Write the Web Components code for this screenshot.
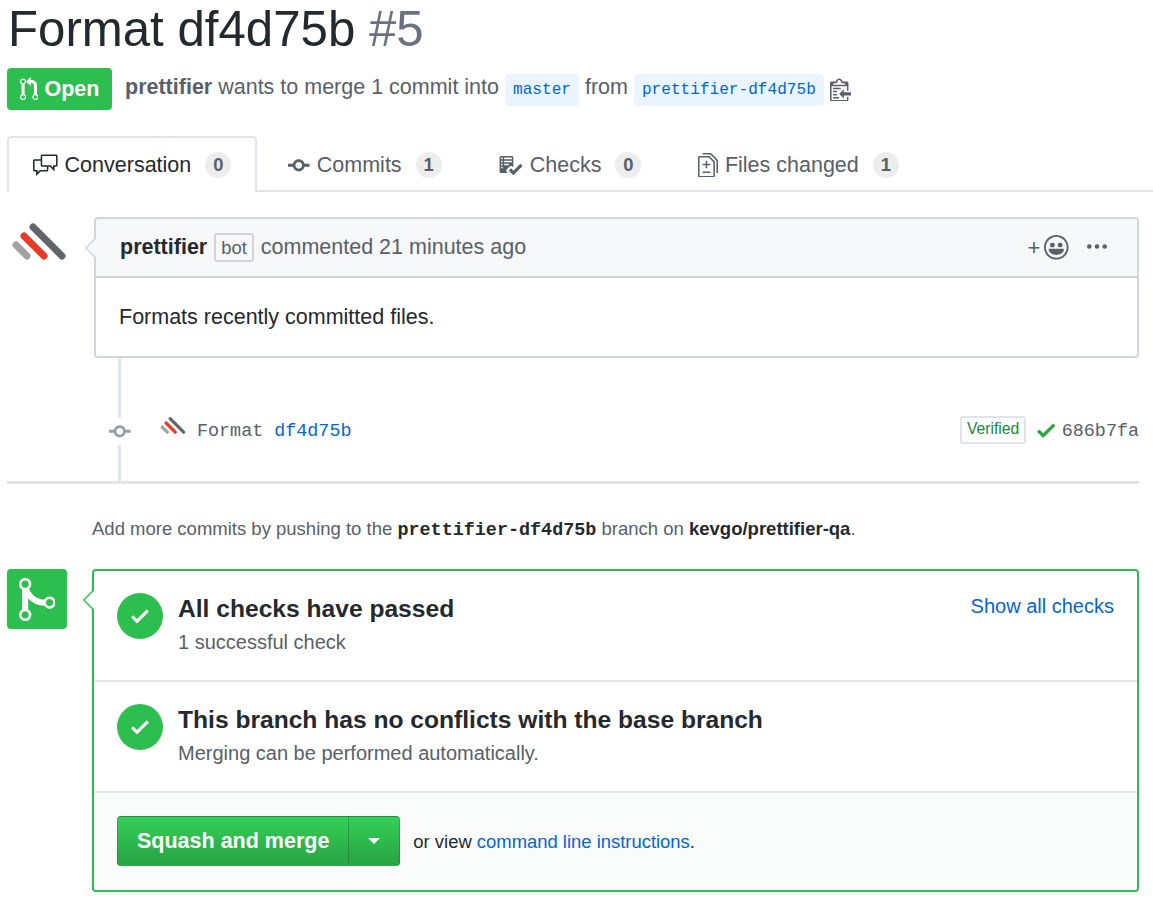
<!DOCTYPE html>
<html>
<head>
<meta charset="utf-8">
<title>Format df4d75b #5</title>
<style>
  html, body { margin: 0; background: #fff; }
  body { font-family: "Liberation Sans", Arial, sans-serif; font-size: 21.5px; color: #24292e; }
</style>
</head>
<body>
<pr-page>
  <pr-header></pr-header>
  <pr-tabs>
    <pr-tab icon="comment" count="0" selected>Conversation</pr-tab>
    <pr-tab icon="commit" count="1">Commits</pr-tab>
    <pr-tab icon="checklist" count="0">Checks</pr-tab>
    <pr-tab icon="diff" count="1">Files changed</pr-tab>
  </pr-tabs>
  <pr-comment></pr-comment>
  <pr-commit></pr-commit>
  <pr-hint></pr-hint>
  <pr-merge>
    <merge-section title="All checks have passed" note="1 successful check" link="Show all checks"></merge-section>
    <merge-section title="This branch has no conflicts with the base branch" note="Merging can be performed automatically."></merge-section>
    <merge-footer></merge-footer>
  </pr-merge>
</pr-page>

<script>
// octicons, viewBox width + path
const ICONS = {
  pr: [12, 'M11 11.28V5c-.03-.78-.34-1.47-.94-2.06C9.46 2.35 8.78 2.03 8 2H7V0L4 3l3 3V4h1c.27.02.48.11.69.31.21.2.3.42.31.69v6.28A1.993 1.993 0 0 0 10 15a1.993 1.993 0 0 0 1-3.72zm-1 2.92c-.66 0-1.2-.55-1.2-1.2 0-.65.55-1.2 1.2-1.2.65 0 1.2.55 1.2 1.2 0 .65-.55 1.2-1.2 1.2zM4 3c0-1.11-.89-2-2-2a1.993 1.993 0 0 0-1 3.72v6.56A1.993 1.993 0 0 0 2 15a1.993 1.993 0 0 0 1-3.72V4.72c.59-.34 1-.98 1-1.72zm-.8 10c0 .66-.55 1.2-1.2 1.2-.65 0-1.2-.55-1.2-1.2 0-.65.55-1.2 1.2-1.2.65 0 1.2.55 1.2 1.2zM2 4.2C1.34 4.2.8 3.65.8 3c0-.65.55-1.2 1.2-1.2.65 0 1.2.55 1.2 1.2 0 .65-.55 1.2-1.2 1.2z'],
  comment: [16, 'M15 1H6c-.55 0-1 .45-1 1v2H1c-.55 0-1 .45-1 1v6c0 .55.45 1 1 1h1v3l3-3h4c.55 0 1-.45 1-1V9h1l3 3V9h1c.55 0 1-.45 1-1V2c0-.55-.45-1-1-1zM9 11H4.5L3 12.5V11H1V5h4v3c0 .55.45 1 1 1h3v2zm6-3h-2v1.5L11.5 8H6V2h9v6z'],
  commit: [14, 'M10.86 7c-.45-1.72-2-3-3.86-3-1.86 0-3.41 1.28-3.86 3H0v2h3.14c.45 1.72 2 3 3.86 3 1.86 0 3.41-1.28 3.86-3H14V7h-3.14zM7 10.2c-1.22 0-2.2-.98-2.2-2.2 0-1.22.98-2.2 2.2-2.2 1.22 0 2.2.98 2.2 2.2 0 1.22-.98 2.2-2.2 2.2z'],
  checklist: [16, 'M16 8.5l-6 6-3-3L8.5 10l1.5 1.5L14.5 7 16 8.5zM5.7 12.2l.8.8H2c-.55 0-1-.45-1-1V3c0-.55.45-1 1-1h7c.55 0 1 .45 1 1v6.5l-.8-.8c-.39-.39-1.03-.39-1.42 0L5.7 10.8a.996.996 0 0 0 0 1.41v-.01zM4 4h5V3H4v1zm0 2h5V5H4v1zm0 2h3V7H4v1zM3 9H2v1h1V9zm0-2H2v1h1V7zm0-2H2v1h1V5zm0-2H2v1h1V3z'],
  diff: [13, 'M6 7h2v1H6v2H5V8H3V7h2V5h1v2zm-3 6h5v-1H3v1zM7.5 2L11 5.5V15c0 .55-.45 1-1 1H1c-.55 0-1-.45-1-1V3c0-.55.45-1 1-1h6.5zM10 6L7 3H1v12h9V6zM8.5 0H3v1h5l4 4v8h1V4.5L8.5 0z'],
  clippy: [14, 'M2 13h4v1H2v-1zm5-6H2v1h5V7zm2 3V8l-3 3 3 3v-2h5v-2H9zM4.5 9H2v1h2.5V9zM2 12h2.5v-1H2v1zm9 1h1v2c-.02.28-.11.52-.3.7-.19.18-.42.28-.7.3H1c-.55 0-1-.45-1-1V4c0-.55.45-1 1-1h3c0-1.11.89-2 2-2 1.11 0 2 .89 2 2h3c.55 0 1 .45 1 1v5h-1V6H1v9h10v-2zM2 5h8c0-.55-.45-1-1-1H8c-.55 0-1-.45-1-1s-.45-1-1-1-1 .45-1 1-.45 1-1 1H3c-.55 0-1 .45-1 1z'],
  check: [12, 'M12 5l-8 8-4-4 1.5-1.5L4 10l6.5-6.5L12 5z'],
  merge: [12, 'M10 7c-.73 0-1.38.41-1.73 1.02V8C7.22 7.98 6 7.64 5.14 6.98c-.75-.58-1.5-1.61-1.89-2.44A1.993 1.993 0 0 0 2 .99C.89.99 0 1.89 0 3a2 2 0 0 0 1 1.72v6.56c-.59.35-1 .99-1 1.72 0 1.11.89 2 2 2a1.993 1.993 0 0 0 1-3.72V7.67c.67.7 1.44 1.27 2.3 1.69.86.42 2.03.63 2.97.64v-.02c.36.61 1 1.02 1.73 1.02 1.11 0 2-.89 2-2 0-1.11-.89-2-2-2zm-6.8 6c0 .66-.55 1.2-1.2 1.2-.65 0-1.2-.55-1.2-1.2 0-.65.55-1.2 1.2-1.2.65 0 1.2.55 1.2 1.2zM2 4.2C1.34 4.2.8 3.65.8 3c0-.65.55-1.2 1.2-1.2.65 0 1.2.55 1.2 1.2 0 .65-.55 1.2-1.2 1.2zm8 6c-.66 0-1.2-.55-1.2-1.2 0-.65.55-1.2 1.2-1.2.65 0 1.2.55 1.2 1.2 0 .65-.55 1.2-1.2 1.2z'],
  kebab: [13, 'M1.5 9a1.5 1.5 0 1 0 0-3 1.5 1.5 0 0 0 0 3zm5 0a1.5 1.5 0 1 0 0-3 1.5 1.5 0 0 0 0 3zM13 7.5a1.5 1.5 0 1 1-3 0 1.5 1.5 0 0 1 3 0z'],
  smiley: [16, 'M8 0C3.58 0 0 3.58 0 8s3.58 8 8 8 8-3.58 8-8-3.58-8-8-8zm4.81 12.81a6.72 6.72 0 0 1-2.17 1.45c-.83.36-1.72.53-2.64.53-.92 0-1.81-.17-2.64-.53-.81-.34-1.55-.83-2.17-1.45a6.773 6.773 0 0 1-1.45-2.17A6.59 6.59 0 0 1 1.21 8c0-.92.17-1.81.53-2.64.34-.81.83-1.55 1.45-2.17.62-.62 1.36-1.11 2.17-1.45A6.59 6.59 0 0 1 8 1.21c.92 0 1.81.17 2.64.53.81.34 1.55.83 2.17 1.45.62.62 1.11 1.36 1.45 2.17.36.83.53 1.72.53 2.64 0 .92-.17 1.81-.53 2.64-.34.81-.83 1.55-1.45 2.17zM4 6.8v-.59c0-.66.53-1.19 1.2-1.19h.59c.66 0 1.19.53 1.19 1.19v.59c0 .67-.53 1.2-1.19 1.2H5.2C4.53 8 4 7.47 4 6.8zm5 0v-.59c0-.66.53-1.19 1.2-1.19h.59c.66 0 1.19.53 1.19 1.19v.59c0 .67-.53 1.2-1.19 1.2h-.59C9.53 8 9 7.47 9 6.8zm4 3.2c-.72 1.88-2.91 3-5 3s-4.28-1.13-5-3c-.14-.39.23-1 .66-1h8.59c.41 0 .89.61.75 1z']
};

// small helper, each element is just a template string in its shadow root
function shadow(el, html) {
  el.attachShadow({ mode: 'open' });
  el.shadowRoot.innerHTML = html;
}

class OctIcon extends HTMLElement {
  connectedCallback() {
    const [w, d] = ICONS[this.getAttribute('name')];
    const h = Number(this.getAttribute('size') || 24.6);
    shadow(this, `
      <style>
        :host { display: inline-flex; color: inherit; flex: none; }
        svg { display: block; fill: currentColor; }
      </style>
      <svg width="${(w * h / 16).toFixed(2)}" height="${h}" viewBox="0 0 ${w} 16"><path fill-rule="evenodd" d="${d}"/></svg>`);
  }
}
customElements.define('oct-icon', OctIcon);

class PrettierLogo extends HTMLElement {
  connectedCallback() {
    const s = this.getAttribute('size') || 60;
    shadow(this, `
      <style>
        :host { display: block; flex: none; width: ${s}px; height: ${s}px; }
        svg { display: block; }
      </style>
      <svg width="${s}" height="${s}" viewBox="0 0 60 60" fill="none" stroke-width="7" stroke-linecap="round">
        <line x1="26" y1="10" x2="55" y2="39" stroke="#646568"/>
        <line x1="17" y1="19" x2="37" y2="39" stroke="#ea3a26"/>
        <line x1="9" y1="28" x2="20" y2="39" stroke="#a2a2a2"/>
      </svg>`);
  }
}
customElements.define('prettier-logo', PrettierLogo);

class PrPage extends HTMLElement {
  constructor() {
    super();
    shadow(this, `
      <style>
        :host { display: block; padding: 0 14px 0 7px; height: 910px; box-sizing: border-box; overflow: hidden; }
      </style>
      <slot></slot>`);
  }
}
customElements.define('pr-page', PrPage);

class BranchRef extends HTMLElement {
  constructor() {
    super();
    shadow(this, `
      <style>
        :host {
          display: inline-block; height: 32px; line-height: 32px; padding: 0 8px; margin-top: 2px;
          background: #eaf5ff; border-radius: 4px; color: #0366d6;
          font-family: "Liberation Mono", monospace; font-size: 16.1px;
        }
      </style>
      <slot></slot>`);
  }
}
customElements.define('branch-ref', BranchRef);

class PrHeader extends HTMLElement {
  constructor() {
    super();
    shadow(this, `
      <style>
        :host { display: block; }
        h1 { margin: 0; font-size: 49.2px; font-weight: 400; line-height: 57px; color: #24292e; padding-left: 1px; }
        h1 span { color: #6a737d; }
        .meta { display: flex; align-items: center; margin-top: 11px; height: 42px; color: #586069; font-size: 21.5px; }
        .state {
          display: flex; align-items: center; gap: 6px; box-sizing: border-box;
          width: 105px; height: 42px; padding-left: 13px; border-radius: 4px;
          background: #2cbe4e; color: #fff; font-weight: 700; margin-right: 13px;
        }
        .text { position: relative; top: -2px; white-space: pre; }
        branch-ref { margin-left: 6px; margin-right: 6px; }
        .clip { color: #586069; }
      </style>
      <h1>Format df4d75b <span>#5</span></h1>
      <div class="meta">
        <div class="state"><oct-icon name="pr" size="24.6"></oct-icon>Open</div>
        <span class="text"><b>prettifier</b> wants to merge 1 commit into</span>
        <branch-ref>master</branch-ref>
        <span class="text">from</span>
        <branch-ref>prettifier-df4d75b</branch-ref>
        <oct-icon class="clip" name="clippy" size="24.6"></oct-icon>
      </div>`);
  }
}
customElements.define('pr-header', PrHeader);

class PrTabs extends HTMLElement {
  constructor() {
    super();
    shadow(this, `
      <style>
        :host {
          display: flex; margin: 26px -14px 0 0; height: 56px; box-sizing: border-box;
          border-bottom: 2px solid #e1e4e8;
        }
      </style>
      <slot></slot>`);
  }
}
customElements.define('pr-tabs', PrTabs);

class PrTab extends HTMLElement {
  connectedCallback() {
    shadow(this, `
      <style>
        :host {
          display: flex; align-items: center; box-sizing: border-box; height: 56px;
          padding: 0 24.5px 0 28px; border: 2px solid transparent; border-bottom: 0;
          color: #586069; font-size: 21.5px; white-space: nowrap;
        }
        :host([selected]) {
          background: #fff; color: #24292e; border-color: #e1e4e8; margin-right: 1px;
          border-radius: 4px 4px 0 0; padding-left: 24px; padding-right: 24px;
        }
        oct-icon { margin-right: 7px; }
        .count {
          margin-left: 14px; min-width: 26px; height: 26px; line-height: 26px; text-align: center;
          border-radius: 13px; background: rgba(27,31,35,.08);
          color: #586069; font-size: 18.4px; font-weight: 700;
        }
      </style>
      <oct-icon name="${this.getAttribute('icon')}" size="24.6"></oct-icon>
      <slot></slot>
      <span class="count">${this.getAttribute('count')}</span>`);
  }
}
customElements.define('pr-tab', PrTab);

class PrComment extends HTMLElement {
  constructor() {
    super();
    shadow(this, `
      <style>
        :host { display: flex; margin-top: 25px; }
        .box {
          position: relative; flex: 1; margin-left: 27px; box-sizing: border-box; height: 141px;
          border: 2px solid #d1d5da; border-radius: 4px;
        }
        .box::before, .box::after {
          content: ""; position: absolute; left: -11px; top: 19px; width: 20px; height: 20px;
          transform: rotate(45deg) scale(.72, .72); background: #d1d5da;
        }
        .box::after { left: -9px; background: #f6f8fa; }
        header {
          position: relative; z-index: 1; display: flex; align-items: center; height: 59px;
          padding: 0 30px 0 24px; box-sizing: border-box;
          background: #f6f8fa; border-bottom: 2px solid #d1d5da; border-radius: 2px 2px 0 0; color: #586069;
          font-size: 21.5px; white-space: nowrap;
        }
        b { color: #24292e; margin-right: 7px; }
        .bot {
          display: inline-block; border: 2px solid #d1d5da; border-radius: 3px; height: 25px; line-height: 25px;
          padding: 0 5px; font-size: 18.4px; margin-right: 7px;
        }
        .acts { margin-left: auto; display: flex; align-items: center; color: #586069; }
        .plus { font-size: 22px; line-height: 23px; margin-right: 4px; }
        .kebab { margin-left: 18px; display: flex; }
        .body { padding: 0 23px; line-height: 78px; font-size: 21.5px; color: #24292e; position: relative; z-index: 1; }
      </style>
      <prettier-logo size="60"></prettier-logo>
      <div class="box">
        <header>
          <b>prettifier</b><span class="bot">bot</span><span>commented 21 minutes ago</span>
          <span class="acts">
            <span class="plus">+</span><oct-icon name="smiley" size="24.6"></oct-icon>
            <span class="kebab"><oct-icon name="kebab" size="24.6"></oct-icon></span>
          </span>
        </header>
        <div class="body">Formats recently committed files.</div>
      </div>`);
  }
}
customElements.define('pr-comment', PrComment);

class PrCommit extends HTMLElement {
  constructor() {
    super();
    shadow(this, `
      <style>
        :host {
          display: block; position: relative; height: 126px; box-sizing: border-box;
          padding-top: 54px; border-bottom: 3px solid #e1e4e8;
        }
        .line { position: absolute; left: 111px; top: 0; bottom: 0; width: 3px; background: #e1e4e8; }
        .node {
          position: absolute; left: 102px; top: 60px; padding: 1px 0; background: #fff;
          display: flex; color: #959da5;
        }
        .row {
          display: flex; align-items: center; height: 36px; padding-left: 151px;
          font-family: "Liberation Mono", monospace; font-size: 18.4px; color: #586069;
        }
        .row > span, .row > a, .right > span:last-child { position: relative; top: 1px; }
        prettier-logo { margin: -4px 11px 0 0; }
        a { color: #0366d6; margin-left: 11px; }
        .right { margin-left: auto; display: flex; align-items: center; }
        .ver {
          box-sizing: border-box; height: 28px; line-height: 22px; padding: 0 5px;
          border: 2px solid #e1e4e8; border-radius: 3px;
          font-family: "Liberation Sans", sans-serif; font-size: 15.7px; color: #22863a; margin-right: 11px;
        }
        .ok { color: #28a745; margin-right: 6px; }
      </style>
      <div class="line"></div>
      <div class="node"><oct-icon name="commit" size="24.6"></oct-icon></div>
      <div class="row">
        <prettier-logo size="28"></prettier-logo>
        <span>Format</span><a>df4d75b</a>
        <div class="right">
          <span class="ver">Verified</span>
          <oct-icon class="ok" name="check" size="24.6"></oct-icon>
          <span>686b7fa</span>
        </div>
      </div>`);
  }
}
customElements.define('pr-commit', PrCommit);

class PrHint extends HTMLElement {
  constructor() {
    super();
    shadow(this, `
      <style>
        :host { display: block; margin-top: 33px; padding-left: 85px; font-size: 18.5px; line-height: 24px; color: #586069; white-space: nowrap; }
        code { font-family: "Liberation Mono", monospace; font-weight: 700; color: #24292e; font-size: 18.43px; }
        b { color: #24292e; }
      </style>
      Add more commits by pushing to the <code>prettifier-df4d75b</code> branch on <b>kevgo/prettifier-qa</b>.`);
  }
}
customElements.define('pr-hint', PrHint);

class PrMerge extends HTMLElement {
  constructor() {
    super();
    shadow(this, `
      <style>
        :host { display: flex; margin-top: 26px; align-items: flex-start; }
        .badge {
          width: 60px; height: 60px; flex: none; border-radius: 4px; background: #2cbe4e;
          display: flex; align-items: center; justify-content: center; color: #fff;
        }
        .box {
          position: relative; flex: 1; margin-left: 25px; height: 323px; box-sizing: border-box;
          border: 2px solid #2cbe4e; border-radius: 4px;
        }
        .box::before, .box::after {
          content: ""; position: absolute; left: -11px; top: 19px; width: 20px; height: 20px;
          transform: rotate(45deg) scale(.72, .72); background: #2cbe4e;
        }
        .box::after { left: -9px; background: #fff; }
        .inner { position: relative; z-index: 1; }
      </style>
      <div class="badge"><oct-icon name="merge" size="49"></oct-icon></div>
      <div class="box"><div class="inner"><slot></slot></div></div>`);
  }
}
customElements.define('pr-merge', PrMerge);

class MergeSection extends HTMLElement {
  connectedCallback() {
    const link = this.getAttribute('link');
    shadow(this, `
      <style>
        :host {
          display: flex; height: 111px; box-sizing: border-box; padding: 22px 23px 0 23px;
          border-bottom: 2px solid #e1e4e8;
        }
        .dot {
          width: 46px; height: 46px; border-radius: 50%; background: #2cbe4e; color: #fff; flex: none;
          display: flex; align-items: center; justify-content: center; margin-right: 15px;
        }
        h3 { margin: 1px 0 0; font-size: 24.6px; line-height: 30px; font-weight: 700; color: #24292e; }
        p { margin: 5px 0 0; font-size: 20px; line-height: 26px; color: #586069; }
        a { margin-left: auto; color: #0366d6; font-size: 20px; line-height: 26px; }
      </style>
      <span class="dot"><oct-icon name="check" size="24"></oct-icon></span>
      <div><h3>${this.getAttribute('title')}</h3><p>${this.getAttribute('note')}</p></div>
      ${link ? `<a>${link}</a>` : ''}`);
  }
}
customElements.define('merge-section', MergeSection);

class MergeFooter extends HTMLElement {
  constructor() {
    super();
    shadow(this, `
      <style>
        :host {
          display: flex; align-items: center; height: 97px; box-sizing: border-box; padding: 0 23px;
          background: #fafbfb; border-radius: 0 0 2px 2px; font-size: 18.43px; color: #24292e;
        }
        .btn {
          display: flex; height: 50px; box-sizing: border-box; border-radius: 4px; overflow: hidden;
          border: 1px solid rgba(27,31,35,.2); margin-right: 13px; margin-top: -2px;
          background: linear-gradient(-180deg, #34d058 0%, #28a745 90%);
          color: #fff; font-weight: 700; font-size: 21.5px;
        }
        .main { display: flex; align-items: center; padding: 1px 19px 0; border-right: 1px solid rgba(27,31,35,.25); }
        .drop { display: flex; align-items: center; justify-content: center; width: 50px; }
        .caret { width: 0; height: 0; border: 6px solid transparent; border-top-color: #fff; border-bottom: 0; }
        a { color: #0366d6; }
      </style>
      <div class="btn"><span class="main">Squash and merge</span><span class="drop"><span class="caret"></span></span></div>
      <span>or view <a>command line instructions</a>.</span>`);
  }
}
customElements.define('merge-footer', MergeFooter);
</script>
</body>
</html>
